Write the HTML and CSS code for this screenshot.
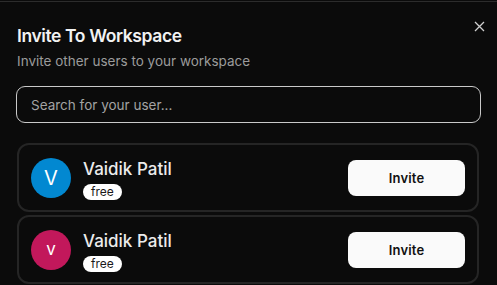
FILE: index.html
```html
<!DOCTYPE html>
<html lang="en">
<head>
    <meta charset="UTF-8">
    <meta name="viewport" content="width=device-width, initial-scale=1.0">
    <title>Invite To Workspace</title>
    <link rel="stylesheet" href="styles.css">
</head>
<body>
    <div class="modal">
        <!-- Sluitknop -->
        <button class="close-btn" aria-label="Close">
            <svg width="11" height="11" viewBox="0 0 11 11">
                <path d="M1 1 L10 10 M10 1 L1 10" stroke="#cfcfcf" stroke-width="1.3" fill="none"/>
            </svg>
        </button>

        <h2 class="title">Invite To Workspace</h2>
        <p class="subtitle">Invite other users to your workspace</p>

        <input type="text" class="search" placeholder="Search for your user...">

        <div class="user-list">
            <div class="user-card">
                <div class="avatar avatar-blue">V</div>
                <div class="user-info">
                    <span class="user-name">Vaidik Patil</span>
                    <span class="badge">free</span>
                </div>
                <button class="invite-btn">Invite</button>
            </div>
            <div class="user-card">
                <div class="avatar avatar-pink small">v</div>
                <div class="user-info">
                    <span class="user-name">Vaidik Patil</span>
                    <span class="badge">free</span>
                </div>
                <button class="invite-btn">Invite</button>
            </div>
        </div>
    </div>
</body>
</html>
```

FILE: styles.css
```css
/* Basis */
body {
    margin: 0;
    background-color: #0b0b0b;
    font-family: 'Inter', 'Liberation Sans', sans-serif;
    color: #ececec;
    overflow: hidden;
}

.modal {
    position: relative;
    margin-top: 1px;
    border-top: 1px solid #2c2c2c;
    padding: 22px 16px 0 16px;
}

.close-btn {
    position: absolute;
    top: 19px;
    right: 12px;
    background: none;
    border: none;
    padding: 0;
    width: 11px;
    height: 11px;
    cursor: pointer;
    display: flex;
}

.title {
    margin: 0 0 0 1px;
    font-size: 17.5px;
    line-height: 24px;
    font-weight: 600;
    color: #f2f2f2;
    letter-spacing: -0.4px;
}

.subtitle {
    margin: 3px 0 0 1px;
    font-size: 13.5px;
    line-height: 20px;
    color: #9b9b9b;
}

.search {
    display: block;
    box-sizing: border-box;
    width: 100%;
    height: 37px;
    margin-top: 15px;
    padding: 0 14px;
    background: transparent;
    border: 1px solid #c9c9c9;
    border-radius: 9px;
    font-family: inherit;
    font-size: 13.5px;
    color: #eee;
    outline: none;
}

.search::placeholder {
    color: #a3a3a3;
}

.user-list {
    display: flex;
    flex-direction: column;
    gap: 3px;
    margin: 20px 2px 0 1px;
}

.user-card {
    display: flex;
    align-items: center;
    height: 69px;
    box-sizing: border-box;
    padding: 0 12px 0 12px;
    border: 2px solid #252525;
    border-radius: 12px;
}

.avatar {
    width: 40px;
    height: 40px;
    border-radius: 50%;
    display: flex;
    align-items: center;
    justify-content: center;
    color: #fff;
    font-size: 20px;
    flex-shrink: 0;
}

.avatar.small {
    font-size: 17px;
    padding-bottom: 2px;
    box-sizing: border-box;
}

.avatar-blue {
    background-color: #0288d1;
}

.avatar-pink {
    background-color: #c2185b;
}

.user-info {
    display: flex;
    flex-direction: column;
    align-items: flex-start;
    margin-left: 12px;
    padding-top: 4px;
    flex: 1;
}

.user-name {
    font-size: 17px;
    font-weight: 500;
    line-height: 20px;
    color: #ececec;
}

.badge {
    margin-top: 5px;
    background-color: #fff;
    color: #1a1a1a;
    font-size: 12px;
    line-height: 16px;
    padding: 0 8px;
    border-radius: 8px;
}

.invite-btn {
    width: 117px;
    height: 36px;
    background-color: #fafafa;
    color: #111;
    border: none;
    border-radius: 8px;
    font-family: inherit;
    font-size: 13px;
    font-weight: 600;
    letter-spacing: 0.2px;
    cursor: pointer;
}
```
